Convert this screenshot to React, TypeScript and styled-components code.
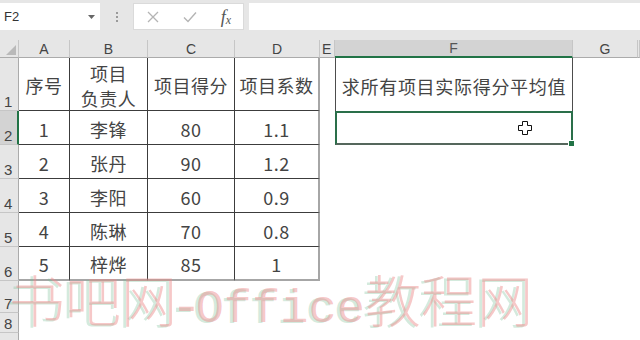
import styled, { createGlobalStyle } from 'styled-components';

const GlobalStyle = createGlobalStyle`
  html, body {
    margin: 0;
    padding: 0;
    background: #ffffff;
  }
  body {
    font-family: "Noto Sans CJK SC", "Liberation Sans", sans-serif;
  }
`;

const COLS = '19px 51px 78px 87px 85px 15px 238px 65px 1fr';
const ROWS = '18px 53px 34px 34px 34px 34px 34px 32px 20px 30px';

const rows = [
  { n: 2, cells: ['1', '李锋', '80', '1.1'] },
  { n: 3, cells: ['2', '张丹', '90', '1.2'] },
  { n: 4, cells: ['3', '李阳', '60', '0.9'] },
  { n: 5, cells: ['4', '陈琳', '70', '0.8'] },
  { n: 6, cells: ['5', '梓烨', '85', '1'] },
];

const letters = ['A', 'B', 'C', 'D', 'E', 'F', 'G', ''];

export default function App() {
  return (
    <Page>
      <GlobalStyle />
      <FormulaBar>
        <NameBox>
          <span>F2</span>
          <svg width="7" height="4" viewBox="0 0 7 4">
            <path d="M0 0 L7 0 L3.5 4 Z" fill="#666" />
          </svg>
        </NameBox>
        <Grip>
          <i />
          <i />
          <i />
        </Grip>
        <FxBox>
          <svg width="12" height="12" viewBox="0 0 12 12">
            <path d="M1 1 L11 11 M11 1 L1 11" stroke="#b4b4b4" strokeWidth="1.3" fill="none" />
          </svg>
          <svg width="14" height="12" viewBox="0 0 14 12">
            <path d="M1 6.5 L5 10.5 L13 1.5" stroke="#b4b4b4" strokeWidth="1.4" fill="none" />
          </svg>
          <Fx>
            f<sub>x</sub>
          </Fx>
        </FxBox>
        <FormulaInput />
      </FormulaBar>

      <Sheet>
        <Corner>
          <svg width="10" height="10" viewBox="0 0 10 10">
            <path d="M10 0 L10 10 L0 10 Z" fill="#b9b9b9" />
          </svg>
        </Corner>
        {letters.map((l, i) => (
          <ColHead key={i} $selected={l === 'F'} $narrow={l === 'E'}>
            {l}
          </ColHead>
        ))}

        <RowHead>1</RowHead>
        <Cell>序号</Cell>
        <Cell>
          项目
          <br />
          负责人
        </Cell>
        <Cell>项目得分</Cell>
        <Cell $edge>项目系数</Cell>
        <Blank />
        <TitleCell>求所有项目实际得分平均值</TitleCell>
        <Blank />
        <Blank />

        {rows.map((r) => (
          <RowGroup key={r.n}>
            <RowHead $selected={r.n === 2}>{r.n}</RowHead>
            {r.cells.map((c, i) => (
              <Cell key={i} $edge={i === 3} $last={r.n === 6}>
                {c}
              </Cell>
            ))}
            <Blank />
            {r.n === 2 ? (
              <ActiveCell>
                <Cursor width="14" height="14" viewBox="0 0 14 14">
                  <path
                    d="M4.5 0.5 H9.5 V4.5 H13.5 V9.5 H9.5 V13.5 H4.5 V9.5 H0.5 V4.5 H4.5 Z"
                    fill="#fff"
                    stroke="#111"
                    strokeWidth="1"
                  />
                </Cursor>
                <FillHandle />
              </ActiveCell>
            ) : (
              <Blank />
            )}
            <Blank />
            <Blank />
          </RowGroup>
        ))}

        {[7, 8, 9].map((n) => (
          <RowGroup key={n}>
            <RowHead>{n}</RowHead>
            {letters.map((_, i) => (
              <Blank key={i} />
            ))}
          </RowGroup>
        ))}
      </Sheet>

      <Watermark>
        书吧网-<Latin>Office</Latin>教程网
      </Watermark>
    </Page>
  );
}

const Page = styled.div`
  position: relative;
  width: 640px;
  height: 340px;
  overflow: hidden;
  background: #fff;
`;

const FormulaBar = styled.div`
  display: flex;
  align-items: stretch;
  height: 27px;
  padding: 3px 0 10px;
  background: #e6e6e6;
`;

const NameBox = styled.div`
  width: 100px;
  display: flex;
  align-items: center;
  justify-content: space-between;
  padding: 0 5px 0 4px;
  box-sizing: border-box;
  background: #fff;
  font-family: "Liberation Sans", sans-serif;
  font-size: 13px;
  color: #333;
`;

const Grip = styled.div`
  width: 33px;
  display: flex;
  flex-direction: column;
  align-items: center;
  justify-content: center;
  gap: 2px;

  i {
    display: block;
    width: 2px;
    height: 2px;
    background: #9a9a9a;
  }
`;

const FxBox = styled.div`
  width: 111px;
  display: flex;
  align-items: center;
  justify-content: space-between;
  padding: 0 12px 0 13px;
  box-sizing: border-box;
  background: #fff;
  border: 1px solid #dadada;
`;

const Fx = styled.span`
  font-family: "Liberation Serif", serif;
  font-style: italic;
  font-size: 18px;
  color: #555;
  line-height: 1;

  sub {
    font-size: 12px;
    vertical-align: -1px;
  }
`;

const FormulaInput = styled.div`
  flex: 1;
  margin-left: 5px;
  background: #fff;
`;

const Sheet = styled.div`
  display: grid;
  grid-template-columns: ${COLS};
  grid-template-rows: ${ROWS};
  background: #fff;
`;

const RowGroup = styled.div`
  display: contents;
`;

const Corner = styled.div`
  display: flex;
  align-items: flex-end;
  justify-content: flex-end;
  padding: 0 2px 2px 0;
  background: #e6e6e6;
  border-right: 1px solid #c6c6c6;
  border-bottom: 1px solid #ababab;
`;

const ColHead = styled.div<{ $selected?: boolean; $narrow?: boolean }>`
  display: flex;
  align-items: center;
  justify-content: ${(p) => (p.$narrow ? 'flex-start' : 'center')};
  padding-left: ${(p) => (p.$narrow ? '2px' : '0')};
  box-sizing: border-box;
  background: ${(p) => (p.$selected ? '#d3d3d3' : '#e6e6e6')};
  border-right: 1px solid #c6c6c6;
  border-bottom: ${(p) => (p.$selected ? '2px solid #217346' : '1px solid #ababab')};
  font-family: "Liberation Sans", sans-serif;
  font-size: 14px;
  color: ${(p) => (p.$selected ? '#555' : '#444')};
  overflow: hidden;
`;

const RowHead = styled.div<{ $selected?: boolean }>`
  display: flex;
  align-items: flex-end;
  padding: 0 0 1px 4px;
  box-sizing: border-box;
  background: ${(p) => (p.$selected ? '#d3d3d3' : '#e6e6e6')};
  border-right: ${(p) => (p.$selected ? '2px solid #217346' : '1px solid #ababab')};
  border-bottom: 1px solid #c6c6c6;
  font-family: "Liberation Sans", sans-serif;
  font-size: 15px;
  color: #444;
  line-height: 1;
  overflow: hidden;
`;

const Cell = styled.div<{ $edge?: boolean; $last?: boolean }>`
  display: flex;
  align-items: center;
  justify-content: center;
  text-align: center;
  padding-top: 3px;
  box-sizing: border-box;
  border-right: ${(p) => (p.$edge ? '2px solid #a6a6a6' : '1px solid #3c3c3c')};
  border-bottom: ${(p) => (p.$last ? '2px solid #a6a6a6' : '1px solid #3c3c3c')};
  font-size: 18px;
  letter-spacing: 0.5px;
  line-height: 25px;
  color: #444;
  white-space: nowrap;
`;

const Blank = styled.div`
  background: #fff;
`;

const TitleCell = styled.div`
  display: flex;
  align-items: center;
  justify-content: center;
  padding-top: 3px;
  box-sizing: border-box;
  border-left: 1px solid #4d4d4d;
  border-right: 1px solid #4d4d4d;
  font-size: 18px;
  letter-spacing: 0.7px;
  color: #444;
  white-space: nowrap;
`;

const ActiveCell = styled.div`
  position: relative;
  box-sizing: border-box;
  border: 2px solid #2a6f4a;
  border-bottom-color: #55675c;
`;

const Cursor = styled.svg`
  position: absolute;
  left: 181px;
  top: 8px;
`;

const FillHandle = styled.div`
  position: absolute;
  right: -4px;
  bottom: -4px;
  width: 5px;
  height: 5px;
  background: #217346;
  border: 1px solid #fff;
`;

const Watermark = styled.div`
  position: absolute;
  left: 9px;
  top: 271px;
  font-family: "Liberation Serif", "Noto Sans CJK SC", serif;
  font-size: 56px;
  font-weight: 300;
  line-height: 64px;
  white-space: nowrap;
  color: rgba(236, 140, 140, 0.48);
  text-shadow: -3px 1px 0 rgba(120, 190, 150, 0.32);
  pointer-events: none;
`;

const Latin = styled.span`
  font-family: "Liberation Mono", monospace;
  font-size: 47px;
  font-weight: 400;
`;
